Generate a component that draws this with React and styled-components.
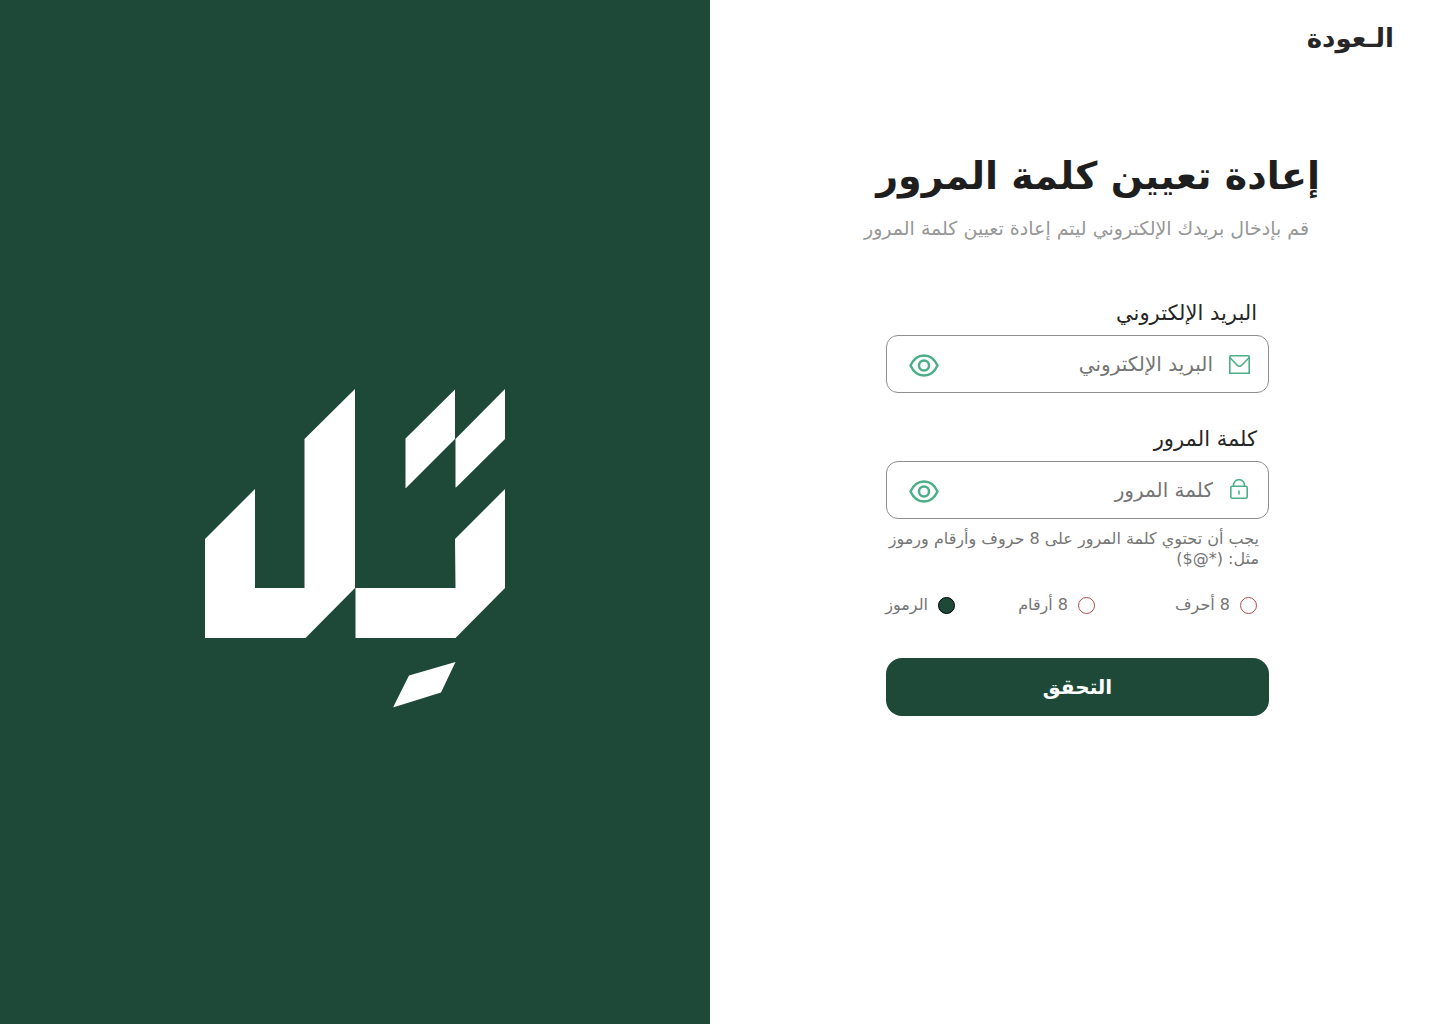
import React, { useState } from "react";
import styled, { createGlobalStyle } from "styled-components";

const GlobalStyle = createGlobalStyle`
  *, *::before, *::after { box-sizing: border-box; }
  body { margin: 0; background: #fff; }
  body, input, button {
    font-family: "DejaVu Sans", sans-serif;
  }
`;

const Page = styled.div`
  display: flex;
  min-height: 100vh;
`;

const BrandPanel = styled.aside`
  flex: 0 0 49.3%;
  display: flex;
  align-items: center;
  justify-content: center;
  padding-top: 74px;
  background: #1e4939;
`;

const FormPanel = styled.main`
  flex: 1;
  min-width: 0;
  display: flex;
  flex-direction: column;
  align-items: flex-start;
  padding: 18px 46px 40px;
`;

const BackLink = styled.a`
  color: #262626;
  font-size: 26px;
  font-weight: 700;
  line-height: 40px;
  text-decoration: none;
`;

const Content = styled.section`
  width: 100%;
  padding: 86px 74px 0 0;
`;

const Title = styled.h1`
  margin: 0;
  color: #1e1e1e;
  font-size: 38px;
  font-weight: 700;
  line-height: 64px;
  white-space: nowrap;
`;

const Subtitle = styled.p`
  margin: 4px 0 0;
  padding-inline-start: 11px;
  color: #979797;
  font-size: 19px;
  line-height: 32px;
  white-space: nowrap;
`;

const Form = styled.form`
  display: flex;
  flex-direction: column;
  max-width: 383px;
  margin-top: 53px;
  margin-inline-start: 51px;
`;

const Label = styled.label`
  padding-inline-start: 12px;
  color: #262626;
  font-size: 21px;
  line-height: 32px;
`;

const Field = styled.div`
  display: flex;
  align-items: center;
  gap: 15px;
  height: 58px;
  margin: 6px 0 ${(p) => (p.$last ? 10 : 30)}px;
  padding-inline: 18px 22px;
  border: 1px solid #8e8e8e;
  border-radius: 12px;
`;

const TextInput = styled.input`
  flex: 1;
  min-width: 0;
  height: 100%;
  padding: 0;
  border: 0;
  outline: 0;
  background: none;
  color: #262626;
  font-size: 20px;
  line-height: 40px;

  &::placeholder { color: #757575; opacity: 1; line-height: 40px; }
`;

const EyeButton = styled.button`
  display: flex;
  padding: 2px 0 0;
  border: 0;
  background: none;
  cursor: pointer;
`;

const Hint = styled.p`
  margin: 0;
  padding-inline-start: 10px;
  color: #757575;
  font-size: 16px;
  line-height: 20px;
  white-space: nowrap;
`;

const Rules = styled.div`
  display: grid;
  grid-template-columns: 162px 140px 1fr;
  margin-top: 20px;
  padding-inline-start: 12px;
`;

const Rule = styled.label`
  display: flex;
  align-items: center;
  gap: 10px;
  color: #757575;
  font-size: 16px;
  line-height: 32px;
  white-space: nowrap;
`;

const Radio = styled.input`
  appearance: none;
  flex: none;
  width: 17px;
  height: 17px;
  margin: 0;
  border: 1px solid #b34a4a;
  border-radius: 50%;

  &:checked { border-color: #000; background: #1e4939; }
`;

const SubmitButton = styled.button`
  height: 58px;
  margin-top: 37px;
  border: 0;
  border-radius: 16px;
  background: #1e4939;
  color: #fff;
  font-size: 20px;
  font-weight: 700;
  cursor: pointer;
`;

const Logo = () => (
  <svg width="300" height="320" viewBox="0 0 300 320" fill="#fff" role="img" aria-label="تل">
    <path d="M0 150 50 100V199H99.500V50L150 0V199L100.500 249H0Z" />
    <path d="M150.500 199H250.500L250 150 300 100V199L250.500 249H150.500Z" />
    <path d="M200.500 49.500 250 .5V50L201 99H200.500Z" />
    <path d="M250.500 50 300 0V50L251 98.500H250.500Z" />
    <path d="M204 286.500 250.500 273 236 303.500 189.500 318Q188 318.500 188.500 317.500Z" />
  </svg>
);

const MailIcon = () => (
  <svg width="22" height="22" viewBox="0 0 22 22" fill="none" stroke="#4caf88" strokeWidth="1.600">
    <path d="M1.800 20.200V3.800Q1.800 2.800 2.800 2.800H20.200Q21.200 2.800 21.200 3.800V20.200Z" />
    <path d="M1.800 4.500 9 12Q11.500 14.500 14 12L21.200 4.500" />
  </svg>
);

const LockIcon = () => (
  <svg width="22" height="22" viewBox="0 0 22 22" fill="none" stroke="#4caf88" strokeWidth="1.600">
    <rect x="2.800" y="7.300" width="16.400" height="12" rx="1.500" />
    <path d="M5.500 7.300V6A5.500 5.300 0 0 1 16.500 6V7.300" />
    <path d="M11 11.500V15.500" />
  </svg>
);

const EyeIcon = () => (
  <svg width="30" height="24" viewBox="0 0 30 24" fill="none" stroke="#4caf88" strokeWidth="2.500">
    <path d="M1.500 12.500C4.500 6 9.500 2.500 15 2.500S25.500 6 28.500 12.500C25.500 19 20.500 22.500 15 22.500S4.500 19 1.500 12.500Z" strokeLinejoin="round" />
    <circle cx="15" cy="12.500" r="5" />
  </svg>
);

const rules = ["8 أحرف", "8 أرقام", "الرموز"];

export default function App() {
  const [rule, setRule] = useState("الرموز");
  const [hideEmail, setHideEmail] = useState(false);
  const [hidePassword, setHidePassword] = useState(true);

  return (
    <>
      <GlobalStyle />
      <Page>
        <BrandPanel>
          <Logo />
        </BrandPanel>
        <FormPanel dir="rtl" lang="ar">
          <BackLink href="#">الـعودة</BackLink>
          <Content>
            <Title>إعادة تعيين كلمة المرور</Title>
            <Subtitle>قم بإدخال بريدك الإلكتروني ليتم إعادة تعيين كلمة المرور</Subtitle>
            <Form onSubmit={(e) => e.preventDefault()}>
              <Label htmlFor="email">البريد الإلكتروني</Label>
              <Field>
                <MailIcon />
                <TextInput id="email" type={hideEmail ? "password" : "text"} placeholder="البريد الإلكتروني" />
                <EyeButton type="button" aria-label="إظهار البريد" onClick={() => setHideEmail(!hideEmail)}>
                  <EyeIcon />
                </EyeButton>
              </Field>
              <Label htmlFor="password">كلمة المرور</Label>
              <Field $last>
                <LockIcon />
                <TextInput id="password" type={hidePassword ? "password" : "text"} placeholder="كلمة المرور" />
                <EyeButton type="button" aria-label="إظهار كلمة المرور" onClick={() => setHidePassword(!hidePassword)}>
                  <EyeIcon />
                </EyeButton>
              </Field>
              <Hint>
                يجب أن تحتوي كلمة المرور على 8 حروف وأرقام ورموز
                <br />
                مثل: (*@$)
              </Hint>
              <Rules>
                {rules.map((text) => (
                  <Rule key={text}>
                    <Radio type="radio" name="rule" checked={rule === text} onChange={() => setRule(text)} />
                    {text}
                  </Rule>
                ))}
              </Rules>
              <SubmitButton type="submit">التحقق</SubmitButton>
            </Form>
          </Content>
        </FormPanel>
      </Page>
    </>
  );
}
